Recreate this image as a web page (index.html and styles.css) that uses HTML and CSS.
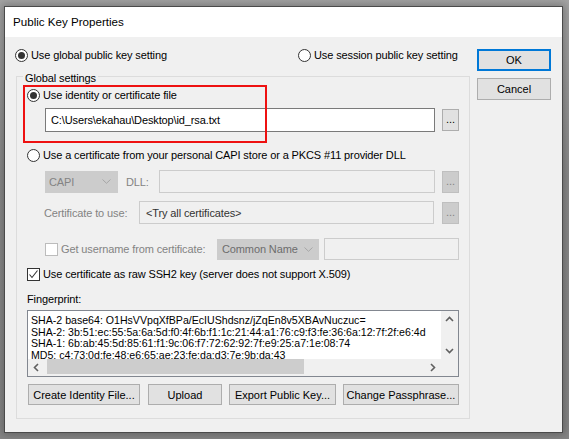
FILE: index.html
```html
<!DOCTYPE html>
<html>
<head>
<meta charset="utf-8">
<title>Public Key Properties</title>
<link rel="stylesheet" href="styles.css">
</head>
<body>
<div class="window">
  <div class="titlebar">Public Key Properties</div>
  <div class="client">
    <div class="main">
      <div class="toprow">
        <div class="opt global"><span class="radio on"></span><span>Use global public key setting</span></div>
        <div class="opt"><span class="radio"></span><span>Use session public key setting</span></div>
      </div>
      <div class="group">
        <div class="group-title">Global settings</div>
        <div class="highlight"></div>
        <div class="opt row-radio1"><span class="radio on"></span><span>Use identity or certificate file</span></div>
        <div class="frow path-row">
          <div class="field">C:\Users\ekahau\Desktop\id_rsa.txt</div>
          <div class="dots">...</div>
        </div>
        <div class="opt row-radio2"><span class="radio"></span><span>Use a certificate from your personal CAPI store or a PKCS #11 provider DLL</span></div>
        <div class="frow capi-row">
          <div class="combo capi"><span>CAPI</span><svg width="9" height="5" viewBox="0 0 9 5"><path d="M0.5 0.5 L4.5 4.3 L8.5 0.5" fill="none" stroke="#a6a6a6" stroke-width="1"/></svg></div>
          <div class="dis-label dll">DLL:</div>
          <div class="field dis"></div>
          <div class="dots dis">...</div>
        </div>
        <div class="frow cert-row">
          <div class="dis-label certlab">Certificate to use:</div>
          <div class="field dis dark">&lt;Try all certificates&gt;</div>
          <div class="dots dis">...</div>
        </div>
        <div class="frow user-row">
          <div class="opt userlab"><span class="check dis"></span><span class="dis-text">Get username from certificate:</span></div>
          <div class="combo cn"><span>Common Name</span><svg width="9" height="5" viewBox="0 0 9 5"><path d="M0.5 0.5 L4.5 4.3 L8.5 0.5" fill="none" stroke="#a6a6a6" stroke-width="1"/></svg></div>
          <div class="field dis"></div>
        </div>
        <div class="opt raw-row"><span class="check"><svg width="11" height="11" viewBox="0 0 11 11"><path d="M1.5 5.5 L4 8.5 L9.5 1.5" fill="none" stroke="#333" stroke-width="1.1"/></svg></span><span>Use certificate as raw SSH2 key (server does not support X.509)</span></div>
        <div class="fp-label">Fingerprint:</div>
        <div class="fp">
          <div class="fp-text">SHA-2 base64: O1HsVVpqXfBPa/EcIUShdsnz/jZqEn8v5XBAvNuczuc=
SHA-2: 3b:51:ec:55:5a:6a:5d:f0:4f:6b:f1:1c:21:44:a1:76:c9:f3:fe:36:6a:12:7f:2f:e6:4d
SHA-1: 6b:ab:45:5d:85:61:f1:9c:06:f7:72:62:92:7f:e9:25:a7:1e:08:74
MD5: c4:73:0d:fe:48:e6:65:ae:23:fe:da:d3:7e:9b:da:43</div>
          <div class="vscroll">
            <svg width="17" height="17" viewBox="0 0 17 17"><path d="M5 10 L8.5 6.5 L12 10" fill="none" stroke="#606060" stroke-width="1.6"/></svg>
            <svg width="17" height="17" viewBox="0 0 17 17"><path d="M5 7 L8.5 10.5 L12 7" fill="none" stroke="#606060" stroke-width="1.6"/></svg>
          </div>
          <div class="hscroll">
            <svg width="17" height="17" viewBox="0 0 17 17"><path d="M10 5 L6.5 8.5 L10 12" fill="none" stroke="#606060" stroke-width="1.6"/></svg>
            <div class="track"><div class="thumb"></div></div>
            <svg width="17" height="17" viewBox="0 0 17 17"><path d="M7 5 L10.5 8.5 L7 12" fill="none" stroke="#606060" stroke-width="1.6"/></svg>
          </div>
          <div class="corner"></div>
        </div>
        <div class="btnrow">
          <button class="btn b-create">Create Identity File...</button>
          <button class="btn b-upload">Upload</button>
          <button class="btn b-export">Export Public Key...</button>
          <button class="btn b-change">Change Passphrase...</button>
        </div>
      </div>
    </div>
    <div class="side">
      <button class="btn side-btn default">OK</button>
      <button class="btn side-btn cancel">Cancel</button>
    </div>
  </div>
</div>
</body>
</html>
```
FILE: styles.css
```css
* { box-sizing: border-box; }
html, body { margin: 0; padding: 0; }
body {
  width: 569px;
  height: 439px;
  overflow: hidden;
  background: linear-gradient(#a4a4a4, #8a8a8a 40%, #868686);
  font-family: "Liberation Sans", Arial, sans-serif;
  font-size: 11px;
  letter-spacing: -0.12px;
  color: #000;
}
.window {
  margin: 6px 0 0 4px;
  width: 559px;
  height: 427px;
  border: 1px solid #4a4a4a;
  background: #f0f0f0;
  box-shadow: 0 0 8px 2px rgba(0, 0, 0, 0.25);
  display: flex;
  flex-direction: column;
}
.titlebar {
  height: 30px;
  flex: none;
  background: #fff;
  padding-left: 8px;
  line-height: 30px;
  font-size: 11.6px;
  letter-spacing: 0;
}
.client { display: flex; flex: 1; }
.main { width: 465px; padding: 10px 0 0 10px; }
.side { padding: 12px 0 0 7px; display: flex; flex-direction: column; gap: 7px; }

.toprow { display: flex; height: 16px; align-items: center; }
.opt { display: flex; align-items: center; gap: 3px; height: 16px; white-space: nowrap; }
.global { width: 283px; }

.radio {
  width: 13px; height: 13px; flex: none;
  border: 1px solid #333; border-radius: 50%;
  background: #fff; position: relative;
}
.radio.on::after {
  content: ""; position: absolute; left: 2px; top: 2px;
  width: 7px; height: 7px; border-radius: 50%; background: #333;
}
.check {
  width: 13px; height: 13px; flex: none;
  border: 1px solid #333; background: #fff;
  display: flex; align-items: center; justify-content: center;
}
.check.dis { border-color: #bcbcbc; }

.group {
  margin: 13px 0 0 1px;
  width: 454px; height: 343px;
  border: 1px solid #dcdcdc;
  padding: 0 10px;
  position: relative;
}
.group-title {
  width: max-content;
  height: 16px; line-height: 16px;
  margin: -7px 0 0 -4px;
  padding: 0 2px;
  background: #f0f0f0;
}
.highlight {
  position: absolute;
  left: 6px; top: 8px;
  width: 244px; height: 58px;
  border: 2px solid #ee1111;
}
.row-radio1 { margin-top: 1px; }
.frow { display: flex; align-items: center; margin-left: 18px; }
.path-row { margin-top: 5px; height: 24px; gap: 7px; }
.field {
  flex: 1; height: 100%;
  border: 1px solid #7a7a7a; background: #fff;
  padding-left: 5px; display: flex; align-items: center;
  white-space: nowrap;
}
.field.dis { border-color: #cccccc; background: #f0f0f0; }
.field.dark { color: #333; padding-left: 6px; }
.dots {
  width: 17px; height: 22px; flex: none;
  border: 1px solid #adadad; background: #e1e1e1;
  display: flex; align-items: flex-end; justify-content: center;
  padding-bottom: 5px; line-height: 1; letter-spacing: 0;
}
.dots.dis { border-color: #bfbfbf; background: #cccccc; color: #838383; }

.row-radio2 { margin-top: 15px; }
.capi-row { margin-top: 7px; height: 23px; }
.combo {
  height: 22px; flex: none;
  background: #cccccc; border: 1px solid #cccccc; color: #838383;
  display: flex; align-items: center; justify-content: space-between;
  padding: 0 6px 0 3px;
}
.capi { width: 73px; }
.dis-label { color: #838383; white-space: nowrap; flex: none; }
.dis-text { color: #838383; }
.dll { width: 33px; margin-left: 8px; }
.capi-row .dots { margin-left: 7px; }
.cert-row { margin-top: 8px; height: 23px; margin-left: 17px; }
.certlab { width: 95px; }
.cert-row .dots { margin-left: 8px; }
.user-row { margin-top: 14px; height: 22px; }
.userlab { width: 172px; }
.cn { width: 102px; height: 21px; margin-right: 5px; color: #6d6d6d; padding: 0 5px 0 4px; }
.user-row .field { height: 22px; }
.raw-row { margin-top: 6px; }
.fp-label { margin-top: 9px; height: 16px; line-height: 16px; }
.fp {
  margin-top: 3px;
  width: 432px; height: 67px;
  border: 1px solid #828790;
  background: #fff;
  display: grid;
  grid-template-columns: 1fr 17px;
  grid-template-rows: 48px 17px;
}
.fp-text {
  padding: 4px 0 0 3px;
  font-size: 10.6px;
  letter-spacing: 0;
  line-height: 11.5px;
  white-space: pre;
  overflow: hidden;
}
.vscroll {
  background: #f0f0f0;
  display: flex; flex-direction: column; justify-content: space-between;
  overflow: hidden;
}
.vscroll svg { display: block; }
.hscroll { background: #f0f0f0; display: flex; align-items: stretch; }
.hscroll svg { display: block; flex: none; }
.track { flex: 1; padding: 0 0 2px 2px; }
.thumb { width: 257px; height: 100%; background: #cdcdcd; }
.corner { background: #f0f0f0; }

.btn {
  font: inherit; color: #000;
  border: 1px solid #adadad; background: #e1e1e1;
  padding: 0; margin: 0;
  white-space: nowrap;
}
.btnrow { display: flex; margin-top: 7px; height: 21px; }
.btnrow .btn { height: 21px; }
.b-create { width: 112px; margin-left: 1px; }
.b-upload { width: 74px; margin-left: 8px; }
.b-export { width: 107px; margin-left: 7px; }
.b-change { width: 116px; margin-left: 7px; }
.side-btn { width: 74px; height: 22px; }
.default { border: 2px solid #0078d7; }
```
